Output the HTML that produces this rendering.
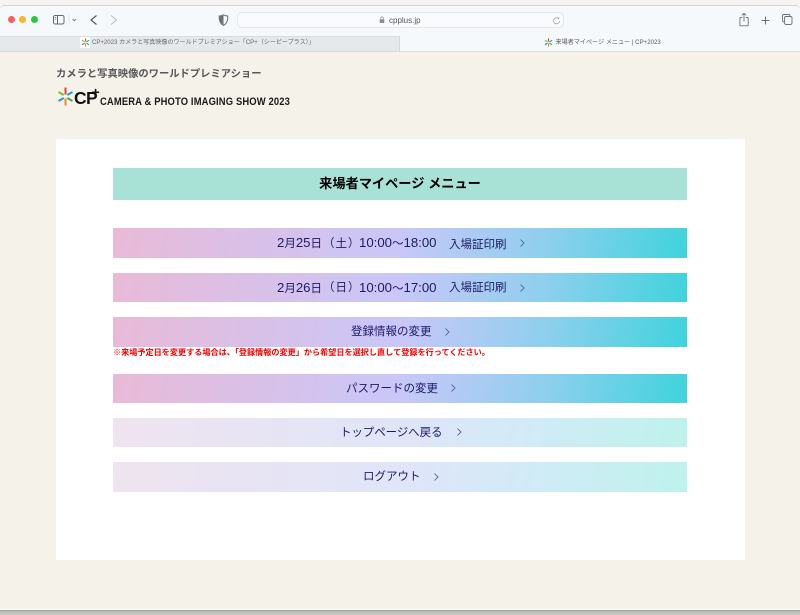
<!DOCTYPE html>
<html lang="ja">
<head>
<meta charset="utf-8">
<title>来場者マイページ メニュー | CP+2023</title>
<style>
html,body{margin:0;padding:0;width:800px;height:615px;overflow:hidden;background:#f4f4f3;font-family:"Liberation Sans","Noto Sans CJK JP",sans-serif}
*{box-sizing:border-box}
.a{position:absolute}
.t{position:absolute;white-space:nowrap;line-height:1}
.toolbar{left:0;top:5px;width:800px;height:31px;background:#f6f9fc;border-top:1px solid #d4d4d4;border-radius:5px 5px 0 0}
.tab1{left:0;top:36px;width:400px;height:16px;background:#e6e9ec;border-top:1px solid #d9dcdf;border-bottom:1px solid #d8dadb;border-right:1px solid #d5d8da}
.tab2{left:400px;top:36px;width:400px;height:16px;background:#f6f9fc;border-bottom:1px solid #dedcd6}
.page{left:0;top:52px;width:800px;height:558px;background:#f5f2ea;border-bottom:1px solid #fffdf5}
.shadow{left:0;top:610px;width:800px;height:5px;background:linear-gradient(#9a9a9a,#bdbdbd 30%,#c6c6c6)}
.panel{left:56px;top:139px;width:689px;height:421px;background:#fff}
.hd{left:113px;top:168px;width:574px;height:32px;background:#a8e1d6;color:#000;font-size:13.200px;font-weight:bold;text-align:center;line-height:31px}
.btn{position:absolute;left:113px;width:574px;height:30px;background:linear-gradient(100deg,#e9bad7 0%,#c9c7f8 50%,#8fcfee 75%,#3fd3dc 100%);color:#1d1a66}
.lt{background:linear-gradient(100deg,#efe4ef 0%,#e0e5f8 50%,#cfecf6 75%,#bef2ec 100%)}
.btn span{position:absolute;top:1px;line-height:30px;font-size:11.500px;white-space:nowrap;color:#1d1a66}
.btn span i{font-style:normal;font-size:13.200px}
.btn svg{position:absolute;top:10px;width:7px;height:10px}
.btn svg path{stroke:#55558f;stroke-width:.85}
.note{left:113px;top:348px;font-size:8.130px;font-weight:bold;color:#f40000;line-height:9px;white-space:nowrap}
</style>
</head>
<body>
<div class="a toolbar"></div>

<div class="a" style="left:8px;top:16px;width:7px;height:7px;border-radius:50%;background:#f8605a"></div>
<div class="a" style="left:19px;top:16px;width:7px;height:7px;border-radius:50%;background:#f6b52c"></div>
<div class="a" style="left:31px;top:16px;width:7px;height:7px;border-radius:50%;background:#2cc63f"></div>

<svg class="a" style="left:50px;top:12px" width="60" height="16" viewBox="0 0 60 16" fill="none">
<rect x="3.500" y="3.500" width="10.500" height="8.500" rx="1.600" stroke="#666a6e" stroke-width="1"/>
<path d="M7.500 3.500V12" stroke="#666a6e" stroke-width="1"/>
<path d="M4.800 5.500h1.400M4.800 7.200h1.400" stroke="#666a6e" stroke-width=".7"/>
<path d="M19 2.500V13" stroke="#dfe2e6" stroke-width=".8"/>
<path d="M22.500 7l1.800 1.800L26 7" stroke="#7c7f83" stroke-width="1"/>
<path d="M46.500 3.500L41 8l5.500 4.500" stroke="#55585c" stroke-width="1.200"/>
</svg>
<svg class="a" style="left:109px;top:14px" width="10" height="12" viewBox="0 0 10 12" fill="none">
<path d="M2 1.500L7.500 6l-5.500 4.500" stroke="#bcbfc3" stroke-width="1.100"/>
</svg>

<svg class="a" style="left:218px;top:14px" width="11" height="12" viewBox="0 0 11 12">
<path d="M5.500 .8C4 1.700 2.600 2 1.200 2c-.2 4 .7 7.600 4.300 9.400C9.100 9.600 10 6 9.800 2 8.400 2 7 1.700 5.500.8z" fill="#f6f9fc" stroke="#6e7175" stroke-width="1"/>
<path d="M5.500.8C4 1.700 2.600 2 1.200 2c-.2 4 .7 7.600 4.300 9.400z" fill="#6e7175"/>
</svg>

<div class="a" style="left:237px;top:12px;width:327px;height:16px;background:#f9fbfd;border:1px solid #e3e6ea;border-radius:5px"></div>
<svg class="a" style="left:379px;top:16px" width="6" height="8" viewBox="0 0 6 8" fill="none">
<rect x=".7" y="3.300" width="4.600" height="3.700" rx=".6" fill="#8a8d91"/>
<path d="M1.700 3.300V2.200a1.300 1.300 0 0 1 2.600 0v1.100" stroke="#8a8d91" stroke-width=".7"/>
</svg>
<div class="t" style="left:389px;top:16.500px;font-size:8px;color:#55585c">cpplus.jp</div>
<svg class="a" style="left:552px;top:16px" width="9" height="9" viewBox="0 0 9 9" fill="none">
<path d="M6.900 3A3 3 0 1 0 7.500 5" stroke="#a0a3a7" stroke-width=".8"/>
<path d="M5 2.300L7.100 1V3.300z" fill="#a0a3a7"/>
</svg>

<svg class="a" style="left:736px;top:11px" width="60" height="18" viewBox="0 0 60 18" fill="none">
<path d="M6.200 6.500H4.700a.8.8 0 0 0-.8.8v6.700a.8.8 0 0 0 .8.8h6.700a.8.8 0 0 0 .8-.8V7.300a.8.800 0 0 0-.8-.8H9.900" stroke="#6c6f73" stroke-width=".9"/>
<path d="M8 10.500V2.200M5.900 4.200L8 2.200l2.100 2" stroke="#6c6f73" stroke-width=".9"/>
<path d="M29.500 5.500v8M25.500 9.500h8" stroke="#6c6f73" stroke-width="1"/>
<rect x="46.500" y="3.500" width="7.500" height="7.500" rx="1.600" stroke="#6c6f73" stroke-width=".9"/>
<rect x="48.500" y="5.500" width="7.500" height="8" rx="1.600" fill="#f6f9fc" stroke="#6c6f73" stroke-width=".9"/>
</svg>

<div class="a tab1"></div>
<div class="a tab2"></div>
<div class="a" style="left:80px;top:37px;width:10px;height:11px;background:#fff"></div>
<svg class="a" style="left:81px;top:38px" width="9" height="9" viewBox="0 0 20 20" stroke-width="2.600">
<path d="M10 1v7" stroke="#e8403a"/><path d="M10 12v7" stroke="#f08a24"/>
<path d="M2 5l6 3.500" stroke="#8fc31f"/><path d="M18 5l-6 3.500" stroke="#2a9fd8"/>
<path d="M2 15l6-3.500" stroke="#2a8fd8"/><path d="M18 15l-6-3.500" stroke="#43b649"/>
</svg>
<div class="t" style="left:92px;top:40px;font-size:6.050px;color:#65686c">CP+2023 カメラと写真映像のワールドプレミアショー「CP+（シーピープラス）」</div>
<svg class="a" style="left:544px;top:38px" width="9" height="9" viewBox="0 0 20 20" stroke-width="2.600">
<path d="M10 1v7" stroke="#e8403a"/><path d="M10 12v7" stroke="#f08a24"/>
<path d="M2 5l6 3.500" stroke="#8fc31f"/><path d="M18 5l-6 3.500" stroke="#2a9fd8"/>
<path d="M2 15l6-3.500" stroke="#2a8fd8"/><path d="M18 15l-6-3.500" stroke="#43b649"/>
</svg>
<div class="t" style="left:555.500px;top:40px;font-size:6.100px;color:#55585c">来場者マイページ メニュー | CP+2023</div>

<div class="a page"></div>
<div class="a shadow"></div>

<div class="t" style="left:56px;top:70px;font-size:10.300px;font-weight:bold;color:#58585a">カメラと写真映像のワールドプレミアショー</div>

<svg class="a" style="left:57px;top:87px" width="17" height="19" viewBox="0 0 17 19" stroke-width="2" stroke-linecap="butt">
<path d="M8.500 .5v7" stroke="#e8403a"/><path d="M8.500 11.500v7" stroke="#f08a24"/>
<path d="M1.500 5l5.200 3" stroke="#7cc030"/><path d="M15.500 5l-5.200 3" stroke="#1f9ed8"/>
<path d="M1.500 14l5.200-3" stroke="#1f9ed8"/><path d="M15.500 14l-5.200-3" stroke="#3fae49"/>
</svg>
<div class="t" style="left:74px;top:90px;font-size:17.500px;font-weight:bold;color:#111;letter-spacing:-.6px">CP</div>
<div class="t" style="left:91.500px;top:85px;font-size:14px;font-weight:bold;color:#111">+</div>
<div class="t" style="left:100px;top:97px;font-size:9.700px;font-weight:bold;color:#1a1a1a;letter-spacing:.15px;transform:scale(.97,1.12);transform-origin:left top">CAMERA &amp; PHOTO IMAGING SHOW 2023</div>

<div class="a panel"></div>
<div class="a hd">来場者マイページ メニュー</div>

<div class="btn" style="top:228px">
<span style="left:164px;top:0"><i>2</i>月<i>25</i>日</span>
<span style="left:210px;letter-spacing:1px">（土）</span>
<span style="left:246px;top:0"><i>10:00</i>〜<i>18:00</i></span>
<span style="left:336px;top:2px">入場証印刷</span>
<svg style="left:405.500px" viewBox="0 0 7 10" fill="none"><path d="M1.500 1.500L5 5l-3.500 3.500"/></svg>
</div>
<div class="btn" style="top:273px;height:29px">
<span style="left:164px;top:0;line-height:29px"><i>2</i>月<i>26</i>日</span>
<span style="left:210px;line-height:29px;letter-spacing:1px">（日）</span>
<span style="left:246px;top:0;line-height:29px"><i>10:00</i>〜<i>17:00</i></span>
<span style="left:336px;line-height:29px">入場証印刷</span>
<svg style="left:405.500px;top:9.500px" viewBox="0 0 7 10" fill="none"><path d="M1.500 1.500L5 5l-3.500 3.500"/></svg>
</div>
<div class="btn" style="top:317px;height:29.500px">
<span style="left:238px;line-height:29px">登録情報の変更</span>
<svg style="left:330.500px;top:9.500px" viewBox="0 0 7 10" fill="none"><path d="M1.500 1.500L5 5l-3.500 3.500"/></svg>
</div>
<div class="a note">※来場予定日を変更する場合は、「登録情報の変更」から希望日を選択し直して登録を行ってください。</div>
<div class="btn" style="top:373.500px;height:29.500px">
<span style="left:233px;line-height:29px">パスワードの変更</span>
<svg style="left:336.500px;top:9.500px" viewBox="0 0 7 10" fill="none"><path d="M1.500 1.500L5 5l-3.500 3.500"/></svg>
</div>
<div class="btn lt" style="top:417.500px;height:29.500px">
<span style="left:227px;line-height:29px;letter-spacing:-.1px">トップページへ戻る</span>
<svg style="left:342.500px;top:9.500px" viewBox="0 0 7 10" fill="none"><path d="M1.500 1.500L5 5l-3.500 3.500"/></svg>
</div>
<div class="btn lt" style="top:462px;height:29.500px">
<span style="left:250px;line-height:29px">ログアウト</span>
<svg style="left:319.500px;top:9.500px" viewBox="0 0 7 10" fill="none"><path d="M1.500 1.500L5 5l-3.500 3.500"/></svg>
</div>
</body>
</html>
